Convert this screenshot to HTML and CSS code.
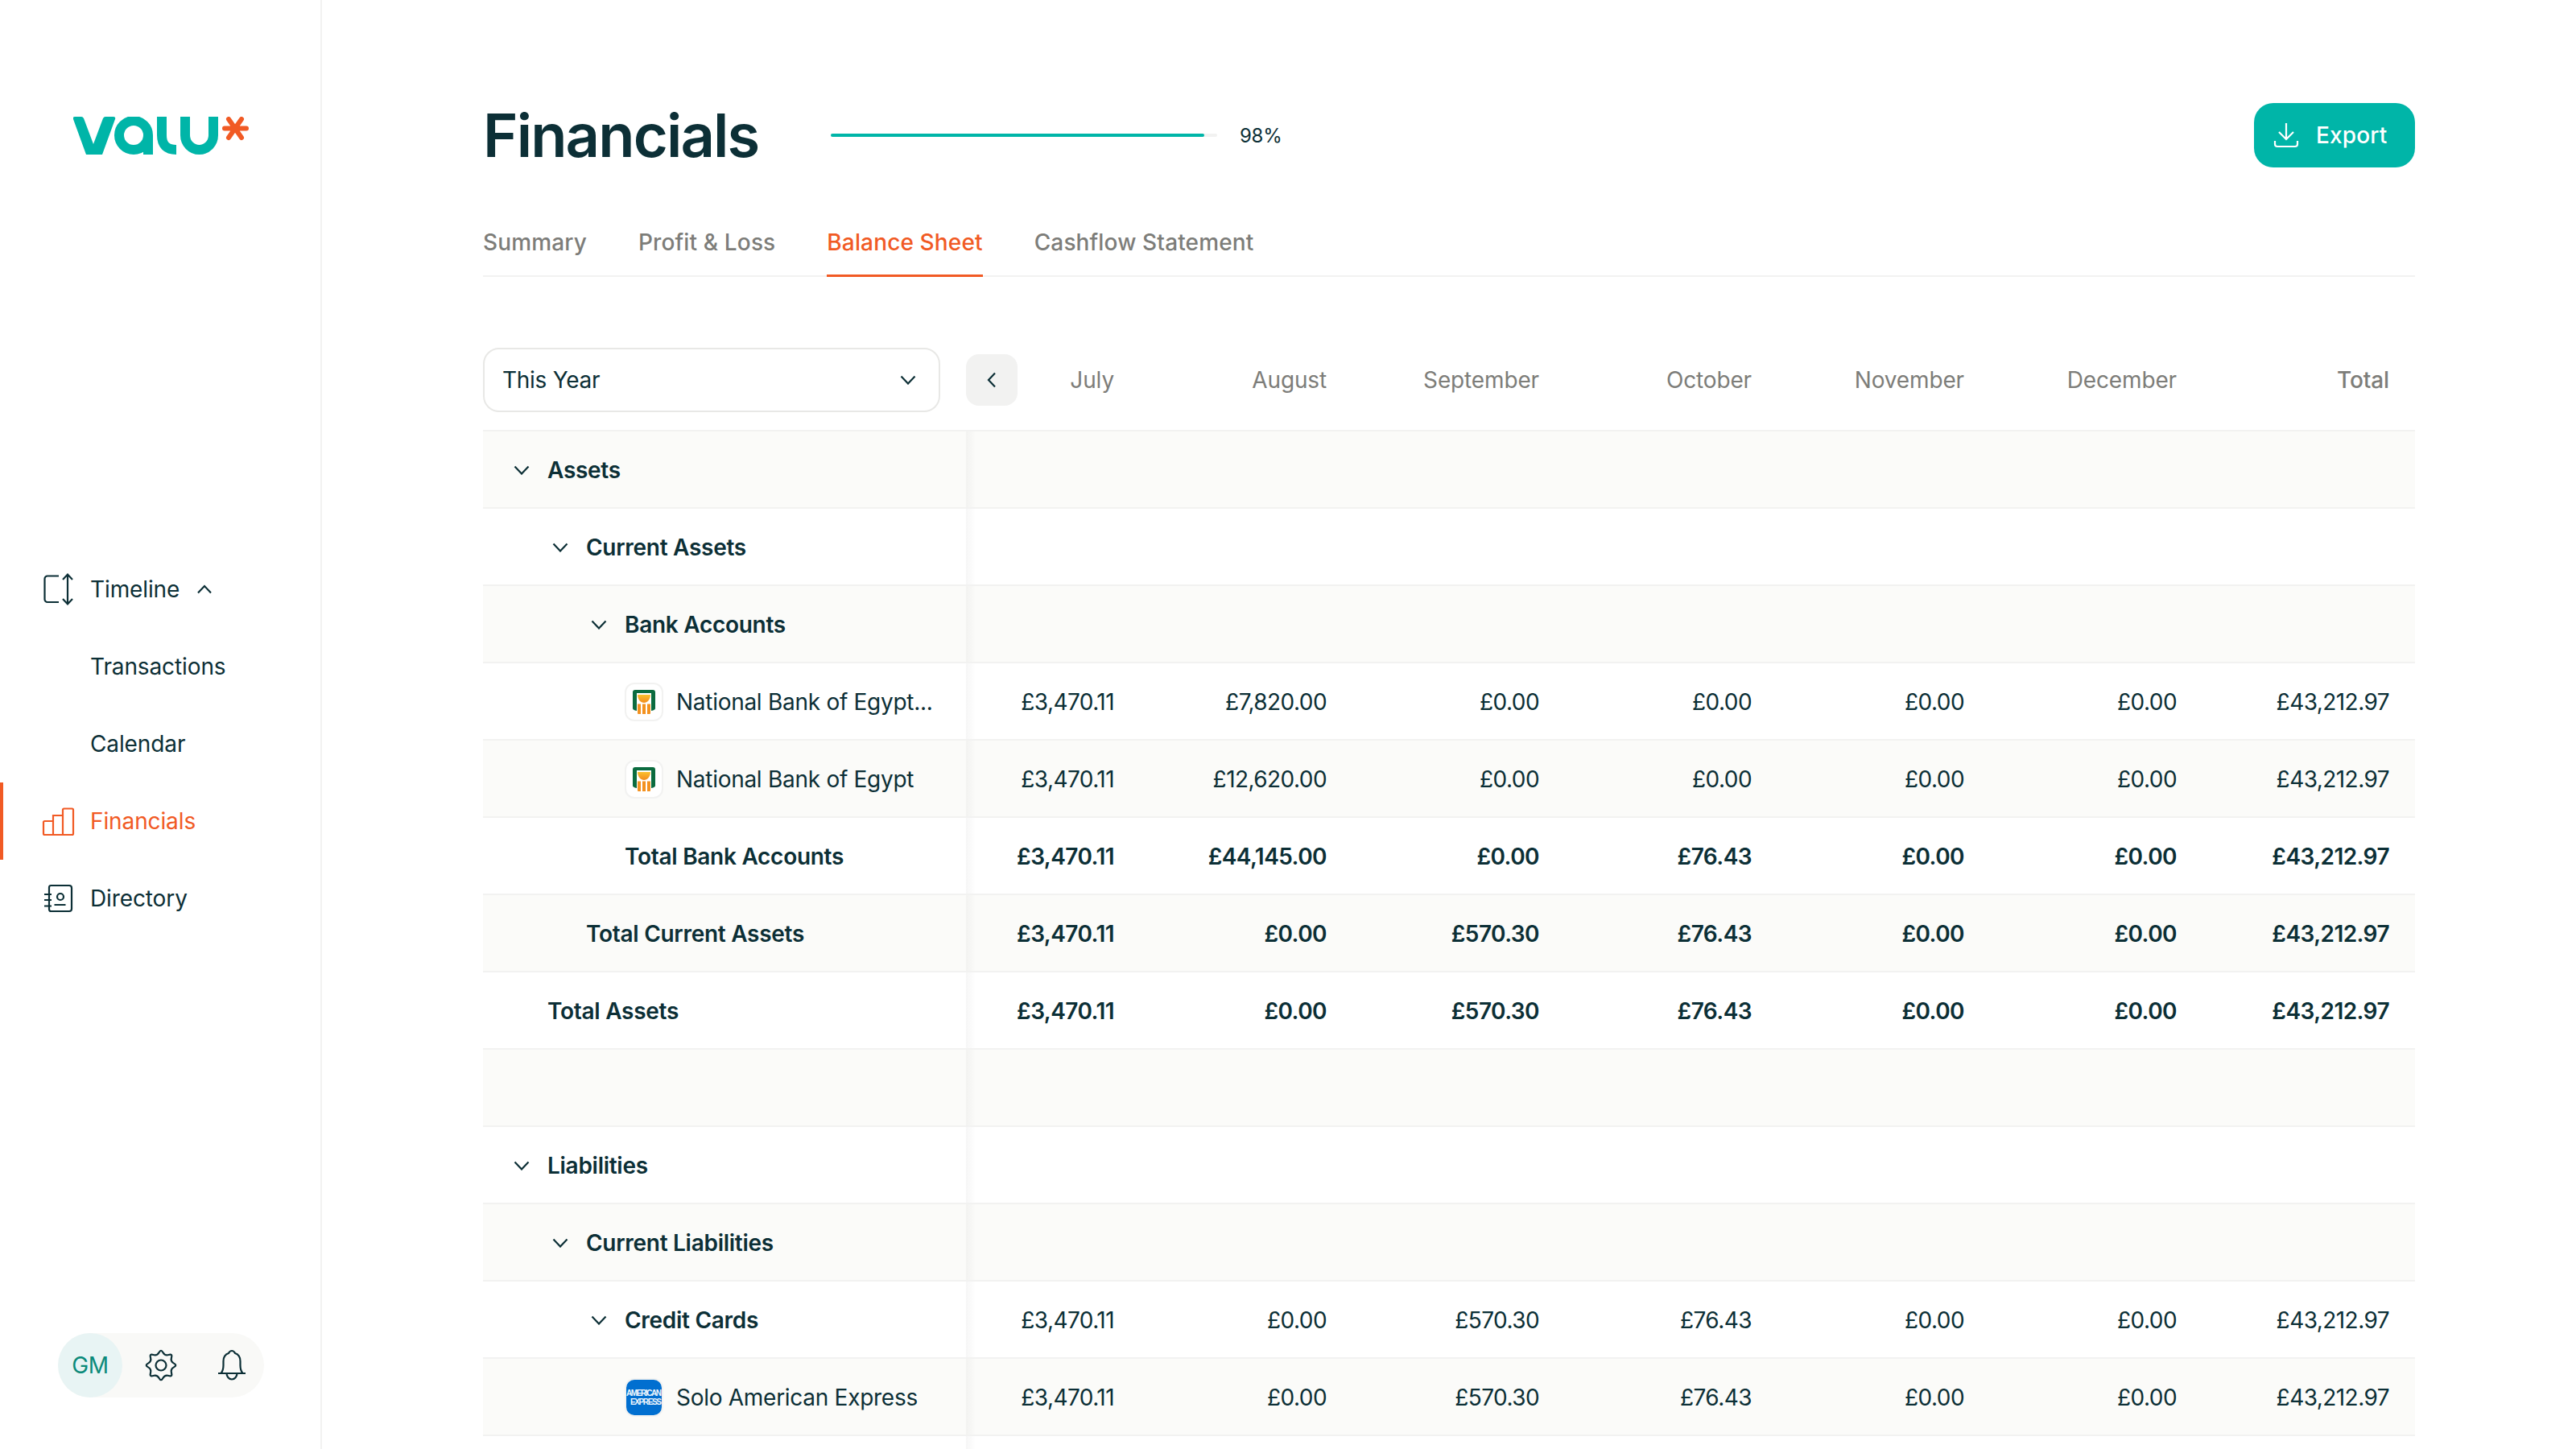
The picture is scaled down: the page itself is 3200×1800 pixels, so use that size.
FILE: index.html
```html
<!DOCTYPE html>
<html>
<head>
    <title>Financials</title>
    <link rel="stylesheet" href="styles.css">
</head>
<body>

<aside class="sidebar">
    <svg class="logo" viewBox="91 145 218 47" width="218" height="47">
        <path fill="#00b5a8" d="M93 145H101Q103 145 104 147L116 179L128 147Q129 145 131 145H141Q144 145 143 148L127 192H107L91 148Q90 145 93 145Z"/>
        <g fill="none" stroke="#00b5a8" stroke-width="12">
            <circle cx="166" cy="168" r="18"/>
            <path d="M184 168V192"/>
            <path d="M201 145V168Q201 186 219 186"/>
            <path d="M230 145V168A17.5 18 0 0 0 265 168V145"/>
        </g>
        <g fill="none" stroke="#f15a24" stroke-width="6" stroke-linecap="round">
            <path d="M279 159.500H306M284 148L300 171M300 148L284 171"/>
        </g>
    </svg>

    <nav class="nav">
        <a class="nav-item">
            <svg class="nav-icon" viewBox="0 0 40 40"><path d="M19 3.500H5A3.500 3.500 0 0 0 1.500 7V32.500A3.500 3.500 0 0 0 5 36H19M30 1.500V38.500M24 8L30 1.500L36 8M24 32L30 38.500L36 32"/></svg>
            Timeline
            <svg class="nav-caret" viewBox="0 0 20 12"><path d="M2 10.500L10 2L18 10.500"/></svg>
        </a>
        <a class="nav-item sub">Transactions</a>
        <a class="nav-item sub">Calendar</a>
        <a class="nav-item active">
            <svg class="nav-icon" viewBox="0 0 40 40"><path d="M0 21.500Q0 20 1.500 20H12V37H1.500Q0 37 0 35.500ZM12 13H24V37H12ZM24 6Q24 4.500 25.500 4.500H35.500Q37 4.500 37 6V35.500Q37 37 35.500 37H24Z"/></svg>
            Financials
        </a>
        <a class="nav-item">
            <svg class="nav-icon" viewBox="0 0 40 40"><path d="M7 6.500Q7 4 9.500 4H32Q35 4 35 7V33Q35 36 32 36H9.500Q7 36 7 33.500ZM1 15H10M1 22H10M1 29.500H10M13.500 28H27.500"/><circle cx="21" cy="18" r="4"/></svg>
            Directory
        </a>
    </nav>

    <div class="user-pill">
        <span class="avatar">GM</span>
        <svg class="pill-icon" viewBox="-20 -20 40 40"><path d="M16.030 -2.390Q20.500 0 16.030 2.390Q11.550 4.780 13.030 9.640Q14.500 14.500 9.640 13.030Q4.780 11.550 2.390 16.030Q0 20.500 -2.390 16.030Q-4.780 11.550 -9.640 13.030Q-14.500 14.500 -13.030 9.640Q-11.550 4.780 -16.030 2.390Q-20.500 0 -16.030 -2.390Q-11.550 -4.780 -13.030 -9.640Q-14.500 -14.500 -9.640 -13.030Q-4.780 -11.550 -2.390 -16.030Q0 -20.500 2.390 -16.030Q4.780 -11.550 9.640 -13.030Q14.500 -14.500 13.030 -9.640Q11.550 -4.780 16.030 -2.390Z"/><circle r="6.500"/></svg>
        <svg class="pill-icon" viewBox="0 0 40 40"><path d="M3 30H37M6.500 30C9 27 9.500 24 9.500 20V15C9.500 9 13 6 16 5C17 3 18.500 2 20 2C21.500 2 23 3 24 5C27 6 30.500 9 30.500 15V20C30.500 24 31 27 33.500 30M13.500 30A6.500 7.500 0 0 0 26.500 30"/></svg>
    </div>
</aside>

<main class="main">
    <header class="top">
        <h1>Financials</h1>
        <div class="progress"><div class="progress-fill"></div></div>
        <span class="progress-label">98%</span>
        <button class="export">
            <svg viewBox="0 0 32 32" width="32" height="32"><path d="M16 1V21M7 12L16 21L25 12M2 23V27Q2 30 5 30H27Q30 30 30 27V23"/></svg>
            Export
        </button>
    </header>

    <div class="tabs">
        <a class="tab">Summary</a>
        <a class="tab">Profit &amp; Loss</a>
        <a class="tab active">Balance Sheet</a>
        <a class="tab">Cashflow Statement</a>
    </div>

    <div class="row head">
        <div class="head-left">
            <div class="select">
                This Year
                <svg class="chev" viewBox="0 0 20 12"><path d="M1.500 1.500L10 10.500L18.500 1.500"/></svg>
            </div>
        </div>
        <div class="month first"><span class="back"><svg viewBox="0 0 12 20" width="12" height="20"><path d="M10 1.500L2 10L10 18.500"/></svg></span>July</div>
        <div class="month">August</div>
        <div class="month">September</div>
        <div class="month">October</div>
        <div class="month">November</div>
        <div class="month">December</div>
        <div class="month total">Total</div>
    </div>

    <div class="row tint strong">
        <div class="name l1"><svg class="chev" viewBox="0 0 20 12"><path d="M1.500 1.500L10 10.500L18.500 1.500"/></svg>Assets</div>
    </div>
    <div class="row strong">
        <div class="name l2"><svg class="chev" viewBox="0 0 20 12"><path d="M1.500 1.500L10 10.500L18.500 1.500"/></svg>Current Assets</div>
    </div>
    <div class="row tint strong">
        <div class="name l3"><svg class="chev" viewBox="0 0 20 12"><path d="M1.500 1.500L10 10.500L18.500 1.500"/></svg>Bank Accounts</div>
    </div>
    <div class="row">
        <div class="name account">
            <span class="bank-logo"><svg viewBox="0 0 44 44" width="44" height="44"><use href="#nbe"/></svg></span>
            <span class="ellipsis">National Bank of Egypt...</span>
        </div>
        <div class="val">£3,470.11</div><div class="val">£7,820.00</div><div class="val">£0.00</div><div class="val">£0.00</div><div class="val">£0.00</div><div class="val">£0.00</div><div class="val">£43,212.97</div>
    </div>
    <div class="row tint">
        <div class="name account">
            <span class="bank-logo"><svg viewBox="0 0 44 44" width="44" height="44"><use href="#nbe"/></svg></span>
            <span class="ellipsis">National Bank of Egypt</span>
        </div>
        <div class="val">£3,470.11</div><div class="val">£12,620.00</div><div class="val">£0.00</div><div class="val">£0.00</div><div class="val">£0.00</div><div class="val">£0.00</div><div class="val">£43,212.97</div>
    </div>
    <div class="row strong">
        <div class="name total3">Total Bank Accounts</div>
        <div class="val">£3,470.11</div><div class="val">£44,145.00</div><div class="val">£0.00</div><div class="val">£76.43</div><div class="val">£0.00</div><div class="val">£0.00</div><div class="val">£43,212.97</div>
    </div>
    <div class="row tint strong">
        <div class="name total2">Total Current Assets</div>
        <div class="val">£3,470.11</div><div class="val">£0.00</div><div class="val">£570.30</div><div class="val">£76.43</div><div class="val">£0.00</div><div class="val">£0.00</div><div class="val">£43,212.97</div>
    </div>
    <div class="row strong">
        <div class="name total1">Total Assets</div>
        <div class="val">£3,470.11</div><div class="val">£0.00</div><div class="val">£570.30</div><div class="val">£76.43</div><div class="val">£0.00</div><div class="val">£0.00</div><div class="val">£43,212.97</div>
    </div>
    <div class="row tint">
        <div class="name"></div>
    </div>
    <div class="row strong">
        <div class="name l1"><svg class="chev" viewBox="0 0 20 12"><path d="M1.500 1.500L10 10.500L18.500 1.500"/></svg>Liabilities</div>
    </div>
    <div class="row tint strong">
        <div class="name l2"><svg class="chev" viewBox="0 0 20 12"><path d="M1.500 1.500L10 10.500L18.500 1.500"/></svg>Current Liabilities</div>
    </div>
    <div class="row">
        <div class="name l3 strong-name"><svg class="chev" viewBox="0 0 20 12"><path d="M1.500 1.500L10 10.500L18.500 1.500"/></svg>Credit Cards</div>
        <div class="val">£3,470.11</div><div class="val">£0.00</div><div class="val">£570.30</div><div class="val">£76.43</div><div class="val">£0.00</div><div class="val">£0.00</div><div class="val">£43,212.97</div>
    </div>
    <div class="row tint">
        <div class="name account">
            <span class="amex"><span>AMERICAN</span><span class="amex-two">EXPRESS</span></span>
            <span class="ellipsis">Solo American Express</span>
        </div>
        <div class="val">£3,470.11</div><div class="val">£0.00</div><div class="val">£570.30</div><div class="val">£76.43</div><div class="val">£0.00</div><div class="val">£0.00</div><div class="val">£43,212.97</div>
    </div>
    <div class="row">
        <div class="name"></div>
    </div>
</main>

<svg class="defs" width="0" height="0">
    <defs>
        <linearGradient id="nbeGold" x1="0" y1="0" x2="0" y2="1">
            <stop offset="0" stop-color="#fbc02d"/>
            <stop offset="1" stop-color="#f28c1e"/>
        </linearGradient>
        <g id="nbe">
            <path fill="#0b6b3f" d="M8 10Q8 7 11 7H33Q36 7 36 10V30Q36 32 31 33V11H13V33Q8 32 8 30Z"/>
            <path fill="url(#nbeGold)" d="M14 13H30C30 19 26 23 22 23C18 23 14 19 14 13Z"/>
            <path fill="#f39220" d="M14 24.500H18V37H15Q14 37 14 36ZM20 24.500H24V37H20ZM26 24.500H30V36Q30 37 29 37H26Z"/>
        </g>
    </defs>
</svg>

</body>
</html>
```

FILE: styles.css
```css
* {
    box-sizing: border-box;
}

html, body {
    margin: 0;
    height: 1800px;
    overflow: hidden;
}

body {
    display: flex;
    font-family: Inter, "Liberation Sans", sans-serif;
    font-size: 28px;
    letter-spacing: -0.01em;
    color: #0c2f36;
    background: #fff;
}

.defs {
    position: absolute;
}

/* sidebar */
.sidebar {
    width: 400px;
    flex: none;
    height: 1800px;
    border-right: 2px solid #f2f2f1;
    display: flex;
    flex-direction: column;
    padding-top: 145px;
    padding-bottom: 64px;
}

.logo {
    display: block;
    margin-left: 91px;
    flex: none;
}

.nav {
    margin-top: 492px;
    letter-spacing: -0.004em;
}

.nav-item {
    display: flex;
    align-items: center;
    height: 96px;
    padding-left: 54px;
}

.nav-item.sub {
    padding-left: 112px;
}

.nav-item.active {
    color: #f15a24;
    box-shadow: inset 4px 0 0 #f15a24;
}

.nav-icon {
    width: 40px;
    height: 40px;
    margin-right: 18px;
    fill: none;
    stroke: currentColor;
    stroke-width: 2.200;
    overflow: visible;
}

.nav-caret {
    width: 20px;
    height: 12px;
    margin-left: 21px;
    fill: none;
    stroke: currentColor;
    stroke-width: 2.200;
}

.user-pill {
    margin-top: auto;
    margin-left: 72px;
    width: 256px;
    height: 80px;
    border-radius: 40px;
    background: #f9f9f7;
    display: flex;
    align-items: center;
}

.avatar {
    width: 80px;
    height: 80px;
    border-radius: 50%;
    background: #e8f4f4;
    color: #0b8a7a;
    display: flex;
    align-items: center;
    justify-content: center;
}

.pill-icon {
    width: 40px;
    height: 40px;
    margin-left: 28px;
    margin-right: 20px;
    fill: none;
    stroke: #0c2f36;
    stroke-width: 2.200;
}

/* main */
.main {
    width: 2800px;
    padding-left: 200px;
    padding-right: 200px;
    padding-top: 128px;
}

.top {
    display: flex;
    align-items: center;
    height: 80px;
}

h1 {
    margin: 0;
    font-size: 74px;
    font-weight: 600;
    letter-spacing: -0.025em;
    width: 432px;
}

.progress {
    width: 480px;
    height: 4px;
    border-radius: 2px;
    background: #f2f2f1;
}

.progress-fill {
    width: 464px;
    height: 4px;
    border-radius: 2px;
    background: #00b5a8;
}

.progress-label {
    font-size: 24px;
    margin-left: 28px;
}

.export {
    margin-left: auto;
    width: 200px;
    height: 80px;
    border: 0;
    border-radius: 24px;
    background: #00b5a8;
    color: #fff;
    font: inherit;
    font-weight: 500;
    letter-spacing: 0.005em;
    display: flex;
    align-items: center;
    gap: 21px;
    padding-left: 24px;
}

.export svg {
    fill: none;
    stroke: #fff;
    stroke-width: 2.200;
}

.tabs {
    margin-top: 64px;
    height: 72px;
    display: flex;
    gap: 64px;
    border-bottom: 2px solid #f2f2f1;
}

.tab {
    height: 72px;
    padding-top: 12px;
    color: #7d7d79;
    font-weight: 500;
    letter-spacing: 0.005em;
}

.tab.active {
    color: #f15a24;
    border-bottom: 3px solid #f15a24;
}

/* table */
.row {
    display: grid;
    grid-template-columns: 600px 216px repeat(6, 264px);
    height: 96px;
    padding-top: 2px;
    align-items: center;
    border-bottom: 2px solid #f2f2f1;
    background: linear-gradient(to right, rgba(0, 0, 0, 0.035), transparent) 600px 0 / 12px 100% no-repeat;
}

.row.tint {
    background-color: #fbfbf9;
}

.row.head {
    margin-top: 88px;
    height: 104px;
    padding-top: 0;
    align-items: start;
    background: none;
}

.row.strong {
    font-weight: 600;
}

.select {
    width: 568px;
    height: 80px;
    border: 2px solid #e8e8e6;
    border-radius: 20px;
    padding: 0 28px 0 22px;
    display: flex;
    align-items: center;
    justify-content: space-between;
}

.chev {
    width: 20px;
    height: 12px;
    flex: none;
    fill: none;
    stroke: #0c2f36;
    stroke-width: 2.200;
}

.month {
    height: 80px;
    padding-right: 32px;
    color: #7d7d79;
    letter-spacing: -0.005em;
    display: flex;
    align-items: center;
    justify-content: flex-end;
}

.month.first {
    justify-content: space-between;
}

.month.total {
    font-weight: 500;
}

.back {
    width: 64px;
    height: 64px;
    border-radius: 16px;
    background: #f2f2f1;
    display: flex;
    align-items: center;
    justify-content: center;
}

.back svg {
    fill: none;
    stroke: #0c2f36;
    stroke-width: 2.200;
}

.name {
    display: flex;
    align-items: center;
}

.name.l1 { padding-left: 38px; }
.name.l2 { padding-left: 86px; }
.name.l3 { padding-left: 134px; }
.name.l1 .chev, .name.l2 .chev, .name.l3 .chev { margin-right: 22px; }
.name.total1 { padding-left: 80px; }
.name.total2 { padding-left: 128px; }
.name.total3 { padding-left: 176px; }
.name.account { padding-left: 176px; }
.strong-name { font-weight: 600; }

.bank-logo, .amex {
    width: 48px;
    height: 48px;
    flex: none;
    margin-right: 16px;
    border-radius: 12px;
    border: 2px solid #f2f2f1;
    background: #fff;
    display: flex;
    overflow: hidden;
}

.amex {
    background: #016fd0;
    color: #f2f8fd;
    flex-direction: column;
    justify-content: center;
    font-family: "Liberation Sans", sans-serif;
    font-size: 10px;
    font-weight: 700;
    letter-spacing: -1.4px;
    line-height: 11px;
    white-space: nowrap;
}

.amex-two {
    padding-left: 5px;
}

.val {
    text-align: right;
    padding-right: 32px;
    white-space: nowrap;
    letter-spacing: -0.02em;
}
```
